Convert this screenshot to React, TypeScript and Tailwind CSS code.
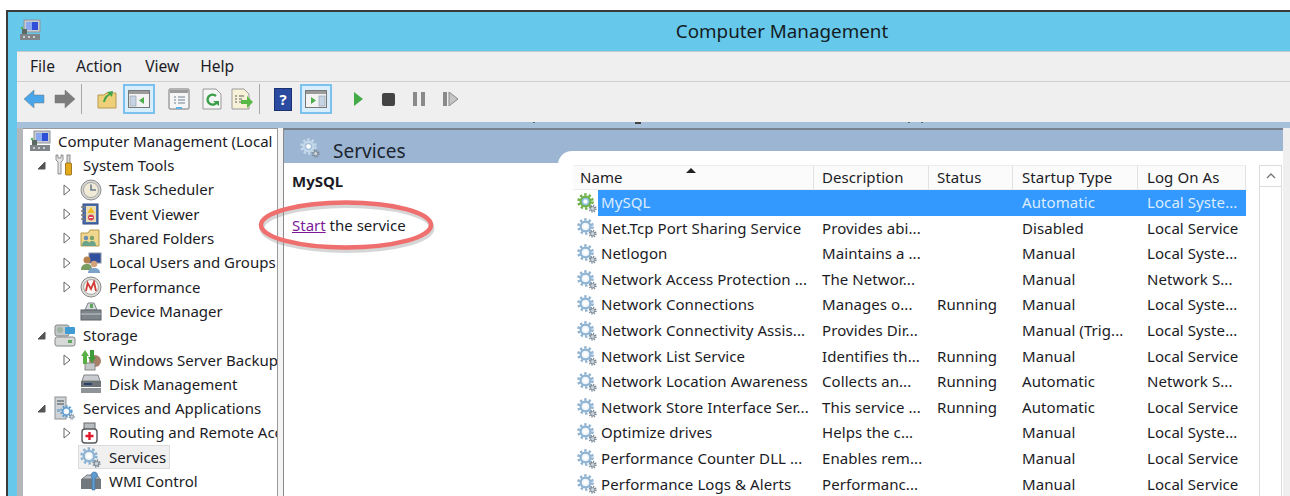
import type { ReactNode } from 'react';

const FONT = "font-['Noto_Sans','Open_Sans',sans-serif]";

type IconProps = { size?: number };

// Two meshed cogs, used for every service entry
function Gear({ size = 20, color = '#8fb3d2', inner = '#eef4f9' }: IconProps & { color?: string; inner?: string }) {
  return (
    <svg width={size} height={size} viewBox="0 0 20 20" fill="none">
      <circle cx="8.5" cy="8.5" r="7" stroke={color} strokeWidth="2.6" strokeDasharray="2.4 2.1" />
      <circle cx="8.5" cy="8.5" r="4.9" fill={inner} stroke={color} strokeWidth="2.2" />
      <circle cx="8.5" cy="8.5" r="2.2" fill="#fff" />
      <circle cx="15.7" cy="15.7" r="3.2" stroke="#7d8a96" strokeWidth="1.6" strokeDasharray="1.3 1.2" />
      <circle cx="15.7" cy="15.7" r="2.2" fill="#c9d3dc" stroke="#7d8a96" strokeWidth="1" />
    </svg>
  );
}

function ComputerIcon() {
  return (
    <svg width="22" height="22" viewBox="0 0 22 22">
      <rect x="5" y="1" width="16" height="12" fill="#c9ccd0" stroke="#8f9499" />
      <rect x="7" y="3" width="12" height="8" fill="#2f4fd8" />
      <path d="M7 3h6v8H7z" fill="#89a8f0" />
      <path d="M3 10h5v5H3z" fill="#5b6a62" />
      <circle cx="3" cy="9" r="1.2" fill="#56b05a" />
      <rect x="1" y="15" width="20" height="6" fill="#7f8589" />
      <path d="M4 18h2M9 18h2M14 18h2" stroke="#e4e6e8" strokeWidth="1.6" />
    </svg>
  );
}

function ToolsIcon() {
  return (
    <svg width="20" height="22" viewBox="0 0 20 22">
      <path d="M2 1v5l2 2v12h3V8l2-2V1L7 1v3H4V1z" fill="#e6e6e6" stroke="#777" strokeWidth=".8" />
      <rect x="13" y="1" width="3" height="9" fill="#d8d8d8" stroke="#777" strokeWidth=".8" />
      <rect x="11.5" y="9" width="6" height="12" rx="1" fill="#e5a91d" stroke="#8a6408" strokeWidth=".8" />
    </svg>
  );
}

function ClockIcon() {
  return (
    <svg width="22" height="22" viewBox="0 0 22 22">
      <circle cx="11" cy="11" r="10" fill="#d5d5d2" stroke="#8d8d8d" />
      <circle cx="11" cy="11" r="7.5" fill="#f1ead6" stroke="#a9a9a9" />
      <path d="M11 5.5V11h5" fill="none" stroke="#6d7e8e" strokeWidth="1.6" />
    </svg>
  );
}

function EventIcon() {
  return (
    <svg width="20" height="22" viewBox="0 0 20 22">
      <rect x="3" y="1" width="15" height="20" fill="#4d6fae" stroke="#2f4a80" />
      <path d="M1 4h4M1 8h4M1 12h4M1 16h4" stroke="#7a7a7a" strokeWidth="1.4" />
      <rect x="6" y="3" width="10" height="16" fill="#e9dcb4" />
      <path d="M11 4l3.6 6H7.4z" fill="#f0bb1f" />
      <circle cx="11" cy="14.5" r="3" fill="#d5454f" />
      <rect x="9.2" y="14" width="3.6" height="1" fill="#fff" />
    </svg>
  );
}

function SharedFolderIcon() {
  return (
    <svg width="20" height="20" viewBox="0 0 20 20">
      <path d="M1 5h7l2-3h9v16H1z" fill="#efd78e" stroke="#b89a4d" />
      <circle cx="6" cy="10" r="2.2" fill="#6b8bb5" />
      <circle cx="12" cy="10" r="2.2" fill="#79a16a" />
      <path d="M2 18c0-4 2-5 4-5s4 1 4 5zM9 18c0-4 1-5 3-5s4 1 4 5z" fill="#6aa389" />
    </svg>
  );
}

function UsersIcon() {
  return (
    <svg width="22" height="22" viewBox="0 0 22 22">
      <rect x="9" y="1" width="12" height="10" fill="#30509f" stroke="#8a93a0" />
      <circle cx="7" cy="8" r="3.5" fill="#b7824e" />
      <path d="M1 18c0-5 3-6 6-6s5 1 5 6z" fill="#7a9b62" />
      <circle cx="14" cy="12" r="3.2" fill="#d3a27a" />
      <path d="M8 21c0-4 3-5 6-5s6 1 6 5z" fill="#7da3c9" />
    </svg>
  );
}

function GaugeIcon() {
  return (
    <svg width="22" height="22" viewBox="0 0 22 22">
      <circle cx="11" cy="11" r="10" fill="#dcdcd8" stroke="#8a8a8a" />
      <circle cx="11" cy="11" r="7.4" fill="#fbfbf7" stroke="#a2a2a2" />
      <path d="M6 15l1.6-8L11 13l3-7 2 9" fill="none" stroke="#d23a36" strokeWidth="1.8" />
    </svg>
  );
}

function DeviceIcon() {
  return (
    <svg width="22" height="20" viewBox="0 0 22 20">
      <path d="M5 9l3-7h6l3 7z" fill="#d6d9db" stroke="#80868a" />
      <rect x="10" y="3" width="3" height="4" fill="#5fa65f" />
      <rect x="1" y="9" width="20" height="10" fill="#7d858a" stroke="#5b6266" />
      <path d="M1 13h20" stroke="#c4c9cc" />
    </svg>
  );
}

function StorageIcon() {
  return (
    <svg width="22" height="24" viewBox="0 0 22 24">
      <rect x="1" y="1" width="14" height="11" rx="2" fill="#c3c7c7" stroke="#85898a" />
      <circle cx="6" cy="6" r="3" fill="#9fb4a5" />
      <rect x="11" y="3" width="10" height="7" rx="1" fill="#3f9bd4" />
      <rect x="1" y="13" width="20" height="9" rx="2" fill="#d7d9d8" stroke="#85898a" />
      <rect x="14" y="16" width="4" height="3" fill="#60a860" />
    </svg>
  );
}

function BackupIcon() {
  return (
    <svg width="22" height="22" viewBox="0 0 22 22">
      <circle cx="15" cy="12" r="6" fill="#a87f68" />
      <rect x="5" y="14" width="10" height="7" fill="#c5c8c8" stroke="#888" />
      <path d="M5 1l4 6H7v8H3V7H1z" fill="#58b044" />
      <path d="M12 14l-4-6h2V1h4v7h2z" fill="#3f9b39" />
    </svg>
  );
}

function DiskIcon() {
  return (
    <svg width="22" height="20" viewBox="0 0 22 20">
      <path d="M4 1h14l2 6H2z" fill="#c9cdcf" stroke="#7f8589" />
      <rect x="1" y="7" width="20" height="6" fill="#6d7478" />
      <rect x="4" y="9" width="8" height="2" fill="#2b3f6b" />
      <rect x="1" y="14" width="20" height="5" fill="#8e9498" />
    </svg>
  );
}

function ServerGearIcon() {
  return (
    <div className="relative w-[20px] h-[24px]">
      <svg width="14" height="24" viewBox="0 0 14 24">
        <rect x="1" y="1" width="11" height="22" fill="#cfd3d6" stroke="#8b9196" />
        <path d="M3 5h7M3 8h7" stroke="#72797e" strokeWidth="1.4" />
        <rect x="3" y="13" width="3" height="3" fill="#8db1cc" />
      </svg>
      <div className="absolute left-[6px] top-[9px]">
        <Gear size={15} color="#5c9bd0" />
      </div>
    </div>
  );
}

function RoutingIcon() {
  return (
    <svg width="20" height="22" viewBox="0 0 20 22">
      <rect x="4" y="1" width="11" height="8" fill="#b9bcbe" stroke="#65696c" />
      <rect x="2" y="7" width="15" height="14" rx="3" fill="#fff" stroke="#55595c" strokeWidth="1.4" />
      <path d="M9.5 10v8M5.5 14h8" stroke="#e3162a" strokeWidth="2.4" />
    </svg>
  );
}

function WmiIcon() {
  return (
    <svg width="22" height="20" viewBox="0 0 22 20">
      <path d="M2 8l5-4h10l3 4z" fill="#b9bec1" stroke="#73797d" />
      <rect x="1" y="8" width="20" height="10" fill="#72797e" />
      <path d="M14 1c3 0 4 2 3 5l-2 1v12h-3V7l-1-2c0-2 1-4 3-4z" fill="#5d9bd0" stroke="#3c6f9c" strokeWidth=".6" />
    </svg>
  );
}

function Arrow({ dir, color }: { dir: 'left' | 'right'; color: string }) {
  const d =
    dir === 'left'
      ? 'M1 10l10-9v5h10v8H11v5z'
      : 'M21 10L11 1v5H1v8h10v5z';
  return (
    <svg width="22" height="20" viewBox="0 0 22 20">
      <path d={d} fill={color} stroke="#6f6f6f" strokeOpacity=".45" />
    </svg>
  );
}

function PaneToggle({ side }: { side: 'left' | 'right' }) {
  return (
    <div className="flex items-center justify-center w-[32px] h-[30px] border-2 border-[#7cc0ee] bg-[#d9eefb]">
      <svg width="22" height="18" viewBox="0 0 22 18">
        <rect x=".5" y=".5" width="21" height="17" fill="#f3f3f3" stroke="#777" />
        <rect x="1" y="1" width="20" height="3" fill="#9a9a9a" />
        {side === 'left' ? (
          <>
            <rect x="2" y="6" width="6" height="10" fill="#c7d4e4" stroke="#8a98a8" strokeWidth=".6" />
            <path d="M16 7v7l-5-3.5z" fill="#4fae4c" />
          </>
        ) : (
          <>
            <rect x="14" y="6" width="6" height="10" fill="#c7d4e4" stroke="#8a98a8" strokeWidth=".6" />
            <path d="M6 7v7l5-3.5z" fill="#4fae4c" />
          </>
        )}
      </svg>
    </div>
  );
}

function Toolbar() {
  return (
    <div className="flex items-center h-[40px] pl-[6px] pb-[6px] shrink-0">
      <Arrow dir="left" color="#4aa6ea" />
      <div className="ml-[9px]">
        <Arrow dir="right" color="#7d7d7d" />
      </div>
      <div className="ml-[5px] w-px h-[30px] bg-[#a8a8a8]" />
      <svg className="ml-[15px]" width="20" height="20" viewBox="0 0 20 20">
        <path d="M1 6h6l2-2h10v15H1z" fill="#eecf7a" stroke="#b59a4e" />
        <path d="M6 13c1-5 3-7 6-8l-2-2 6-1-1 6-2-2c-2 1-4 3-5 7z" fill="#3fa347" />
      </svg>
      <div className="ml-[6px]">
        <PaneToggle side="left" />
      </div>
      <svg className="ml-[13px]" width="22" height="22" viewBox="0 0 22 22">
        <rect x="1" y="1" width="20" height="20" rx="1" fill="#f5f5f5" stroke="#777" />
        <rect x="2" y="2" width="18" height="3" fill="#9b9b9b" />
        <path d="M6 9h2M10 9h7M6 12h2M10 12h7M6 15h2M10 15h7" stroke="#6f7f90" />
        <rect x="8" y="19" width="6" height="2" fill="#5eb0e5" />
      </svg>
      <svg className="ml-[12px]" width="20" height="22" viewBox="0 0 20 22">
        <path d="M1 1h13l5 5v15H1z" fill="#f5f5f5" stroke="#9a9a9a" />
        <path d="M14 8a5 5 0 1 0 1 6" fill="none" stroke="#3a9f48" strokeWidth="2.4" />
        <path d="M11 13h6v5z" fill="#3a9f48" />
      </svg>
      <svg className="ml-[9px]" width="22" height="22" viewBox="0 0 22 22">
        <path d="M1 1h12l5 5v15H1z" fill="#f7f1d8" stroke="#9a9a9a" />
        <path d="M4 8h2M8 8h5M4 11h2M8 11h3M4 14h2M8 14h3" stroke="#5f5f5f" />
        <path d="M10 12h6V8l6 6-6 6v-4h-6z" fill="#58b947" />
      </svg>
      <div className="ml-[6px] w-px h-[30px] bg-[#a8a8a8]" />
      <div className="ml-[14px] flex items-center justify-center w-[18px] h-[23px] bg-[#2a4ba0] text-white text-[15px] font-bold leading-none border border-[#1b3272]">
        ?
      </div>
      <div className="ml-[8px]">
        <PaneToggle side="right" />
      </div>
      <svg className="ml-[22px]" width="9" height="14" viewBox="0 0 9 14">
        <path d="M0 0l9 7-9 7z" fill="#45ab49" />
      </svg>
      <div className="ml-[19px] w-[13px] h-[13px] rounded-[2px] bg-[#444]" />
      <svg className="ml-[18px]" width="12" height="14" viewBox="0 0 12 14">
        <path d="M0 0h4v14H0zM8 0h4v14H8z" fill="#8a8a8a" />
      </svg>
      <svg className="ml-[18px]" width="16" height="14" viewBox="0 0 16 14">
        <path d="M0 0h4v14H0z" fill="#8a8a8a" />
        <path d="M6 0l9 7-9 7z" fill="#c4c4c4" stroke="#8a8a8a" />
      </svg>
    </div>
  );
}

type TreeNode = { label: string; level: 0 | 1 | 2; expander?: 'open' | 'closed'; icon: ReactNode; selected?: boolean };

const TREE: TreeNode[] = [
  { label: 'Computer Management (Local', level: 0, icon: <ComputerIcon /> },
  { label: 'System Tools', level: 1, expander: 'open', icon: <ToolsIcon /> },
  { label: 'Task Scheduler', level: 2, expander: 'closed', icon: <ClockIcon /> },
  { label: 'Event Viewer', level: 2, expander: 'closed', icon: <EventIcon /> },
  { label: 'Shared Folders', level: 2, expander: 'closed', icon: <SharedFolderIcon /> },
  { label: 'Local Users and Groups', level: 2, expander: 'closed', icon: <UsersIcon /> },
  { label: 'Performance', level: 2, expander: 'closed', icon: <GaugeIcon /> },
  { label: 'Device Manager', level: 2, icon: <DeviceIcon /> },
  { label: 'Storage', level: 1, expander: 'open', icon: <StorageIcon /> },
  { label: 'Windows Server Backup', level: 2, expander: 'closed', icon: <BackupIcon /> },
  { label: 'Disk Management', level: 2, icon: <DiskIcon /> },
  { label: 'Services and Applications', level: 1, expander: 'open', icon: <ServerGearIcon /> },
  { label: 'Routing and Remote Access', level: 2, expander: 'closed', icon: <RoutingIcon /> },
  { label: 'Services', level: 2, icon: <Gear size={21} />, selected: true },
  { label: 'WMI Control', level: 2, icon: <WmiIcon /> },
];

function Expander({ kind }: { kind?: 'open' | 'closed' }) {
  if (kind === 'open') {
    return (
      <svg width="9" height="9" viewBox="0 0 9 9">
        <path d="M8 1v7H1z" fill="#555" stroke="#555" />
      </svg>
    );
  }
  if (kind === 'closed') {
    return (
      <svg width="8" height="12" viewBox="0 0 8 12">
        <path d="M1 1l6 5-6 5z" fill="#fff" stroke="#666" />
      </svg>
    );
  }
  return null;
}

function TreeRow({ node }: { node: TreeNode }) {
  // Expander slot, then icon, then label; only the indent changes per depth
  const indent = node.level === 0 ? 'pl-[6px]' : node.level === 1 ? 'pl-[14px]' : 'pl-[40px]';
  const slot = node.level === 0 ? 'w-0' : 'w-[17px]';
  return (
    <div className={`flex items-center h-[24.3px] whitespace-nowrap ${indent}`}>
      <div className={`flex items-center shrink-0 ${slot}`}>
        <Expander kind={node.expander} />
      </div>
      <div className="relative z-10 flex items-center shrink-0 w-[29px]">{node.icon}</div>
      <span
        className={
          node.selected
            ? 'bg-[#f0f0f0] -ml-[31px] pl-[30px] pr-[3px] border border-[#dcdcdc] leading-[22px]'
            : ''
        }
      >
        {node.label}
      </span>
    </div>
  );
}

type Service = { name: string; description: string; status: string; startup: string; logon: string };

const SERVICES: Service[] = [
  { name: 'MySQL', description: '', status: '', startup: 'Automatic', logon: 'Local Syste...' },
  { name: 'Net.Tcp Port Sharing Service', description: 'Provides abi...', status: '', startup: 'Disabled', logon: 'Local Service' },
  { name: 'Netlogon', description: 'Maintains a ...', status: '', startup: 'Manual', logon: 'Local Syste...' },
  { name: 'Network Access Protection ...', description: 'The Networ...', status: '', startup: 'Manual', logon: 'Network S...' },
  { name: 'Network Connections', description: 'Manages o...', status: 'Running', startup: 'Manual', logon: 'Local Syste...' },
  { name: 'Network Connectivity Assis...', description: 'Provides Dir...', status: '', startup: 'Manual (Trig...', logon: 'Local Syste...' },
  { name: 'Network List Service', description: 'Identifies th...', status: 'Running', startup: 'Manual', logon: 'Local Service' },
  { name: 'Network Location Awareness', description: 'Collects an...', status: 'Running', startup: 'Automatic', logon: 'Network S...' },
  { name: 'Network Store Interface Ser...', description: 'This service ...', status: 'Running', startup: 'Automatic', logon: 'Local Service' },
  { name: 'Optimize drives', description: 'Helps the c...', status: '', startup: 'Manual', logon: 'Local Syste...' },
  { name: 'Performance Counter DLL ...', description: 'Enables rem...', status: '', startup: 'Manual', logon: 'Local Service' },
  { name: 'Performance Logs & Alerts', description: 'Performanc...', status: '', startup: 'Manual', logon: 'Local Service' },
];

const COLUMNS = 'grid grid-cols-[241px_115px_84px_125px_108px] w-[673px]';

function ServicesTable() {
  return (
    <div className="flex-1 flex -mt-[12px] rounded-tl-[14px] bg-white pl-[15px] pt-[14px] min-w-0 tracking-[0.08px]">
      <div className="w-[673px] shrink-0">
        <div className={`${COLUMNS} h-[25px] bg-[#fbfbfb] border-y border-[#ececec] items-center`}>
          <div className="relative pl-[7px] border-r border-[#e2e2e2] leading-[23px]">
            Name
            <div className="absolute left-[113px] top-[2px] w-0 h-0 border-x-[5px] border-x-transparent border-b-[5px] border-b-[#222]" />
          </div>
          <div className="pl-[8px] border-r border-[#e2e2e2] leading-[23px]">Description</div>
          <div className="pl-[8px] border-r border-[#e2e2e2] leading-[23px]">Status</div>
          <div className="pl-[9px] border-r border-[#e2e2e2] leading-[23px]">Startup Type</div>
          <div className="pl-[9px] border-r border-[#e2e2e2] leading-[23px]">Log On As</div>
        </div>
        {SERVICES.map((svc, i) => {
          const active = i === 0;
          const band = active ? 'bg-[#3399ff]' : '';
          return (
            <div
              key={svc.name}
              className={`${COLUMNS} h-[25.6px] items-center whitespace-nowrap ${active ? 'text-[#dcecff]' : ''}`}
            >
              <div className="flex items-center h-full pl-[4px]">
                <div className="w-[21px] shrink-0">
                  <Gear color={active ? '#6fb24a' : '#8fb3d2'} inner={active ? '#8fc0e8' : '#eef4f9'} />
                </div>
                <span className={`flex-1 h-full pl-[3px] leading-[25px] ${band}`}>{svc.name}</span>
              </div>
              <div className={`h-full pl-[8px] leading-[25px] ${band}`}>{svc.description}</div>
              <div className={`h-full pl-[8px] leading-[25px] ${band}`}>{svc.status}</div>
              <div className={`h-full pl-[9px] leading-[25px] ${band}`}>{svc.startup}</div>
              <div className={`h-full pl-[9px] leading-[25px] ${band}`}>{svc.logon}</div>
            </div>
          );
        })}
      </div>
      {/* vertical scrollbar */}
      <div className="ml-[13px] w-[23px] shrink-0 -mr-px border-x border-[#dcdcdc]">
        <div className="flex items-center justify-center h-[22px] border-y border-[#dcdcdc]">
          <svg width="10" height="6" viewBox="0 0 10 6">
            <path d="M1 5l4-4 4 4" fill="none" stroke="#777" strokeWidth="1.4" />
          </svg>
        </div>
      </div>
    </div>
  );
}

export default function App() {
  return (
    <div className={`relative w-[1290px] h-[496px] overflow-hidden bg-white pt-[10px] pl-[6px] text-[15px] text-[#1b1b26] ${FONT}`}>
      <div className="flex flex-col h-[486px] border-t-2 border-l-2 border-[#3a3a3a] bg-[#66c8ea]">
        {/* title bar */}
        <div className="relative flex items-center justify-center h-[39px] shrink-0 text-[18.8px] text-[#141c24]">
          <div className="absolute left-[11px] top-[7px]">
            <ComputerIcon />
          </div>
          <span className="pl-[266px]">Computer Management</span>
        </div>

        <div className="flex flex-col flex-1 min-h-0 ml-[9px] bg-[#efefef] border-t border-[#c4c9cc]">
          {/* menu */}
          <div className="flex items-center h-[30px] pl-[13px] border-b border-[#cfcfcf] shrink-0 text-[15.6px]">
            <span>File</span>
            <span className="ml-[21px]">Action</span>
            <span className="ml-[23px]">View</span>
            <span className="ml-[21px]">Help</span>
          </div>
          <Toolbar />
          <div className="relative h-[6px] shrink-0 bg-[#a8c1da]">
            {/* descenders of a clipped line poking into the splitter strip */}
            <div className="absolute left-[516px] top-0 w-[2px] h-px bg-[#5a6a7a]" />
            <div className="absolute left-[618px] top-0 w-[6px] h-[2px] bg-[#444]" />
            <div className="absolute left-[891px] top-0 w-[2px] h-px bg-[#5a6a7a]" />
            <div className="absolute left-[904px] top-0 w-[2px] h-px bg-[#5a6a7a]" />
          </div>

          <div className="flex flex-1 min-h-0">
            <div className="w-[6px] shrink-0 bg-[#b4b7ba]" />
            {/* console tree */}
            <div className="w-[255px] shrink-0 overflow-hidden bg-white border-r border-t border-[#9a9a9a]">
              {TREE.map((node) => (
                <TreeRow key={node.label} node={node} />
              ))}
            </div>
            <div className="w-[5px] shrink-0 bg-[#f4f4f4]" />
            {/* results pane */}
            <div className="flex flex-col w-[1000px] shrink-0 bg-white border-l border-[#8a8a8a]">
              <div className="flex items-center h-[35px] shrink-0 bg-[#9bb5d2] border-t-2 border-[#77828e] pl-[16px] pt-[9px] text-[19px] text-[#1c2530]">
                <div className="w-[33px] -mt-[6px]">
                  <Gear size={20} color="#c4d8ea" inner="#a9c3dd" />
                </div>
                Services
              </div>
              <div className="flex flex-1 min-h-0">
                <div className="w-[274px] shrink-0 pl-[8px]">
                  <div className="pt-[4px] font-bold leading-[28px]">MySQL</div>
                  <div className="pt-[18px] leading-[24px]">
                    <span className="text-[#7a1a9a] underline">Start</span> the service
                  </div>
                </div>
                <ServicesTable />
              </div>
            </div>
          </div>
        </div>
      </div>

      {/* red callout ring around the Start link */}
      <svg className="absolute left-[250px] top-[195px]" width="195" height="65" viewBox="0 0 195 65" fill="none">
        <ellipse cx="97" cy="33" rx="85" ry="22.5" stroke="#8a8a8a" strokeOpacity=".35" strokeWidth="5" />
        <ellipse cx="96" cy="30" rx="85" ry="22.5" stroke="#ef6e6e" strokeWidth="4.5" />
      </svg>
    </div>
  );
}
